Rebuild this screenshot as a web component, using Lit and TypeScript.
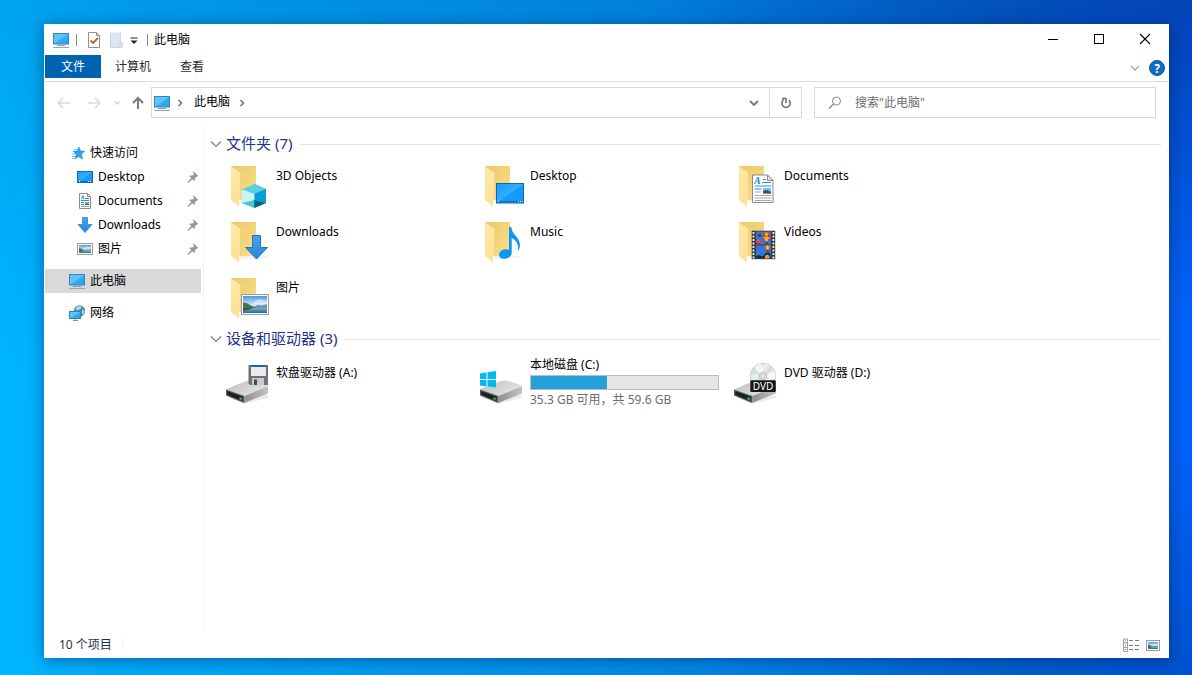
import { LitElement, html, svg, css } from "lit";
import { customElement, property } from "lit/decorators.js";

/* Shared gradients, repeated inside each icon so every shadow root can resolve them. */
const defs = svg`<defs>
  <linearGradient id="scr" x1="0" y1="0" x2="1" y2="1"><stop offset="0" stop-color="#5cc6f8"/><stop offset=".5" stop-color="#5cc4f9"/><stop offset=".52" stop-color="#35aef5"/><stop offset="1" stop-color="#2b9ff0"/></linearGradient>
  <linearGradient id="desk" x1="0" y1="0" x2="1" y2="1"><stop offset="0" stop-color="#149cff"/><stop offset=".5" stop-color="#36acff"/><stop offset=".52" stop-color="#159bff"/><stop offset="1" stop-color="#1597fb"/></linearGradient>
  <linearGradient id="back" x1="0" y1="0" x2="1" y2="1"><stop offset="0" stop-color="#eac867"/><stop offset="1" stop-color="#fbdf8b"/></linearGradient>
  <linearGradient id="flap" x1="0" y1="0" x2="0" y2="1"><stop offset="0" stop-color="#ffe9a6"/><stop offset="1" stop-color="#fce196"/></linearGradient>
  <linearGradient id="top" x1="0" y1="0" x2="1" y2=".6"><stop offset="0" stop-color="#bcbcbe"/><stop offset="1" stop-color="#e6e6e8"/></linearGradient>
  <linearGradient id="side" x1="0" y1="0" x2="1" y2="0"><stop offset="0" stop-color="#8e8e90"/><stop offset="1" stop-color="#c3c3c5"/></linearGradient>
  <linearGradient id="sky" x1="0" y1="0" x2="0" y2="1"><stop offset="0" stop-color="#4f95e4"/><stop offset=".55" stop-color="#d5ecfb"/><stop offset="1" stop-color="#d5ecfb"/></linearGradient>
  <linearGradient id="sea" x1="0" y1="0" x2="0" y2="1"><stop offset="0" stop-color="#7fb3c4"/><stop offset="1" stop-color="#28668f"/></linearGradient>
  <linearGradient id="arrow" x1="0" y1="0" x2="0" y2="1"><stop offset="0" stop-color="#4aa3ee"/><stop offset="1" stop-color="#2585da"/></linearGradient>
  <linearGradient id="disc" x1="0" y1="0" x2="1" y2="1"><stop offset="0" stop-color="#c9cdcc"/><stop offset=".35" stop-color="#eef0f0"/><stop offset=".5" stop-color="#d6e6dc"/><stop offset=".7" stop-color="#f4eef4"/><stop offset="1" stop-color="#c4c6c8"/></linearGradient>
</defs>`;

const folder = svg`
  <path d="M12 38h27l1 1.500-16 1.500H12z" fill="#000" opacity=".05"/>
  <path d="M3 4h25v34H12L3 36z" fill="url(#back)"/>
  <path d="M3 4l9.500 6.500v25.500L11 37v7.500L3 38z" fill="url(#flap)"/>
  <path d="M3 4l9.500 6.500v26" fill="none" stroke="#eccb78" stroke-width=".5"/>`;

const drive = svg`
  <path d="M-1 40l17 7 24-6v-3z" fill="#000" opacity=".08"/>
  <path d="M-2 32.500L8 28l11-4q3-1 6-.3L39 28l1 1.500-23.500 10z" fill="url(#top)"/>
  <path d="M-2 32.500v6L16 46l.5-7z" fill="#58585b"/>
  <path d="M-.700 34.300v3.500l15 6.200.4-4.200z" fill="#1e1e20"/>
  <path d="M16.500 39L40 29.200v7.300L16 46z" fill="url(#side)"/>
  <path d="M11.500 40.300l2.200.8v2l-2.200-.8z" fill="#3fe03a"/>`;

const monitor = svg`
  <rect x=".5" y="1.500" width="15" height="10.500" fill="url(#scr)" stroke="#3c84ad"/>
  <path d="M6 12.500h4v1H6z" fill="#9fb9ca"/><path d="M4 13.500h8" stroke="#7f9fb4"/>
  <path d="M0 15.500h16" stroke="#8ca5bd"/>`;

const scene = svg`
  <rect x="2" y="2" width="24" height="17" fill="url(#sky)"/>
  <path d="M14 7q2-2 4-1 2-2 4 0 2 0 4 1v3H12z" fill="#fff" opacity=".45"/>
  <path d="M12 13l5-2 4 .5 5-1.500v4H12z" fill="#7296a4"/>
  <path d="M2 8.500l4 .7 4 2.300 5 2-2 1H2z" fill="#43764a"/>
  <rect x="2" y="14" width="24" height="5" fill="url(#sea)"/>
  <path d="M2 14h10l-4 1.500-6 1.500z" fill="#2d5946"/>`;

const bigPhoto = svg`<g transform="translate(13 20)"><rect width="28" height="21" fill="#9b9b9b"/><rect x="1" y="1" width="26" height="19" fill="#fff"/>${scene}</g>`;

const smallPhoto = (x: number, y: number, w: number, h: number) => svg`
  <rect x=${x + 0.5} y=${y + 0.5} width=${w - 1} height=${h - 1} fill="#fff" stroke="#9b9b9b"/>
  <g transform="translate(${x + 2} ${y + 2}) scale(${(w - 4) / 24} ${(h - 4) / 17}) translate(-2 -2)">${scene}</g>`;

const balloon = (x: number, y: number) => svg`<g transform="translate(${x} ${y})">
  <path d="M0-4.500c4.500 0 5.500 5 3 7L1 5h-2l-2-2.500C-5.500.5-4.500-4.500 0-4.500z" fill="#d8502c"/>
  <path d="M0-4.500q-2.500 3-1 9h2q1.500-6-1-9z" fill="#f7cf2b"/><path d="M-4-1h8v1h-8z" fill="#263c3c" opacity=".7"/><path d="M-3.500 .500h7L2 2.500h-4z" fill="#f0a22c"/>
  <path d="M-1 6h2v1.500h-2z" fill="#432d23"/></g>`;

const page = (extra: unknown) => svg`<path d="M16.500 13h15l5.500 5.500v22H16.500z" fill="#fff" stroke="#8a8a8a"/><path d="M31.500 13v5.500H37z" fill="#e8e8e8" stroke="#8a8a8a"/>${extra}`;

const BIG: Record<string, unknown> = {
  objects: svg`${folder}
    <path d="M13.700 27.500L26.300 22v24l-12.600-5z" fill="#c0eef1"/><path d="M26.300 22L38 27v14l-11.700 5z" fill="#15b2ce"/>
    <path d="M13.700 27.500L26.300 22 38 27l-11.700 5z" fill="#5ad0dc"/><path d="M26.300 32L38 27v14l-11.700-3z" fill="#079fd5"/>
    <path d="M13.700 27.500l12.600 4.500v7l-12.600 2z" fill="#c9f3f4"/><path d="M13.700 41l12.600-3v8z" fill="#4fc6d0"/><path d="M26.300 38L38 41l-11.700 5z" fill="#04667d"/>`,
  desktop: svg`${folder}<rect x="14.500" y="21.500" width="27" height="19.500" fill="url(#desk)" stroke="#0b67ae"/>
    <path d="M15 39.500h26" stroke="#0873c5"/><path d="M15.500 39.500h1M36 39.500h1m1 0h1m1 0h1" stroke="#fff"/>`,
  documents: svg`${folder}${page(svg`
    <text x="18" y="22" class="letter">A</text>
    <path d="M27 17.500h3M26 20.500h9M18.500 24h17M18.500 27h7" stroke="#2293dc"/><rect x="27" y="26" width="8" height="5.500" fill="#7bb8e6"/><path d="M27 29l4-1 4 2v1.500h-8z" fill="#2f5967"/>
    <path d="M18.500 30h7M18.500 33.500h17M18.500 36h17M18.500 38.500h17" stroke="#a9a9a9"/>`)}`,
  downloads: svg`${folder}<path d="M24.500 17.500h8v12h7L28.500 41 17.500 29.500h7z" fill="url(#arrow)" stroke="#2673bb"/>`,
  music: svg`${folder}<path d="M27 9h2.300q.500 5 4.500 9 6.500 7 2.700 14.500h-.8q1.800-8.500-6-12.500v15.500q-1 4.500-6.500 5.200-6 .5-6.200-4.200.8-4.500 6-5.200 2.500-.2 4 .7z" fill="#0798f5"/>`,
  videos: svg`${folder}<rect x="15.700" y="12.700" width="23.500" height="28.500" fill="#3a3a3a"/>
    <path d="M17.500 14v27M37.400 14v27" stroke="#eee" stroke-width="1.800" stroke-dasharray="2 1.500"/>
    <rect x="20" y="13.500" width="15" height="13" fill="#3275d8"/><rect x="20" y="27.500" width="15" height="13" fill="#3275d8"/>
    <path d="M20 22l3-1 4 5.500h-7z" fill="#df4f57"/><path d="M20 24l3 1 4 1.500h-7z" fill="#8b2f86"/>
    ${balloon(30.5, 18.5)}<path d="M28 27.500h7q-.5 3-2.500 4h-2q-2-1-2.500-4z" fill="#e2692b"/><path d="M30.500 27.500h2v4h-2z" fill="#f7cf2b"/><path d="M31 32h1.500v1.500H31z" fill="#432d23"/>
    <path d="M22 16.500h3v2h-3z" fill="#234"/><path d="M20 38.500q2-2 4-1l3 1 2-3q3-2 5 0l1 5H20z" fill="#1b2836"/><path d="M29 38q2-3 4.500 0v2.500H29z" fill="#ef9727"/>`,
  pictures: svg`${folder}${bigPhoto}`,
  floppy: svg`${drive}<path d="M20.500 8H40v20H22l-1.500-1.500z" fill="#6f7175"/><rect x="23" y="8" width="15" height="11" fill="#e9ebed"/><rect x="23" y="8" width="15" height="2" fill="#1662b5"/>
    <rect x="24" y="21" width="12" height="7" fill="#c9cbce"/><rect x="26" y="22.500" width="3" height="5.500" fill="#494b4e"/>`,
  disk: svg`${drive}<path d="M-2 16.500l6.500-1v6.500H-2zM5.500 15.300L14 14v8H5.500zM-2 23h6.500v6.500l-6.500-1zM5.500 23H14v7.500l-8.500-1.200z" fill="#00b9f1"/>`,
  dvd: svg`${drive}<circle cx="27" cy="19" r="12.700" fill="url(#disc)" stroke="#b8bbbc" stroke-width=".6"/>
    <path d="M27 19L18 10q3-3 7-3.500zM27 19l12 3q1-4-.500-8z" fill="#fff" opacity=".6"/><path d="M27 19L15 16q1-3 2-4.500z" fill="#bfe8cd" opacity=".7"/><path d="M27 19l7-10q2 1.500 3 3z" fill="#ecc8e4" opacity=".7"/>
    <circle cx="27" cy="19" r="3.800" fill="#d8dadb" stroke="#aeb1b3" stroke-width=".6"/><circle cx="27" cy="19" r="1.600" fill="#fff" stroke="#aaa" stroke-width=".5"/>
    <rect x="14.300" y="23.300" width="25.500" height="11.700" rx="1" fill="#161616"/><text x="27" y="32.500" class="dvd">DVD</text>`,
};

const SMALL: Record<string, unknown> = {
  pc: monitor,
  star: svg`<path d="M10 2l1.500 4 4 .2-3.100 3 1 4.800-3.700-2.500L5.800 14l1.400-4.600L4.200 6.300l4-.2z" fill="#2aa4ee" stroke="#1a80c6" stroke-width=".6"/>
    <path d="M5 4.500h3M2.500 9h3.500M3 11.500h3M3 13.500h2" stroke="#54b8f1" stroke-width=".8"/>`,
  desktop: svg`<rect x=".5" y="2.500" width="15" height="11" fill="url(#desk)" stroke="#0b6cb8"/><path d="M1 12.500h14" stroke="#0873c5"/><path d="M2 12.500h1m8 0h1m1 0h1" stroke="#fff"/>`,
  documents: svg`<path d="M2.500.500h8l3 3v12h-11z" fill="#fff" stroke="#8a8a8a"/><path d="M10.500.500v3h3" fill="none" stroke="#8a8a8a"/><path d="M4.500 6l1.500-3.500L7 6M8 5.500h4M4 7.500h8M4 9.500h3M4 11.500h3" stroke="#2893db" fill="none"/><rect x="8" y="9" width="4" height="3" fill="#6ba5d0"/><path d="M8 11h4v1H8z" fill="#35606b"/><path d="M4 13.500h8" stroke="#999"/>`,
  downloads: svg`<path d="M5.500.500h5v7h4.500L8 15.500 1 7.500h4.500z" fill="url(#arrow)" stroke="#2a79c4" stroke-width=".7"/>`,
  pictures: smallPhoto(0, 2, 16, 12),
  network: svg`<circle cx="10.500" cy="6" r="5.500" fill="#4c94b9"/><path d="M6.500 3q3-3 6.500-1.500L11 4l-3 1.500zM13 5l3 1-1 4-2-2z" fill="#b7dbe4"/><circle cx="10.500" cy="6" r="5.300" fill="none" stroke="#3a7595" stroke-width=".5"/>
    <rect x=".5" y="6.500" width="11" height="7" fill="url(#scr)" stroke="#3981aa"/><path d="M4 15.500h5M6 14v1" stroke="#7498b0"/>`,
  check: svg`<path d="M2.500.500h8l3 3v12h-11z" fill="#fff" stroke="#919191"/><path d="M10.500.500v3h3" fill="none" stroke="#919191"/><path d="M4.500 8.500L7 11l5-5" fill="none" stroke="#e8501c" stroke-width="1.800"/>`,
  newFolder: svg`<path d="M2 .500h11v10h1.500v5.500H2z" fill="#dce5f4"/><path d="M2.500 1v14.500h9.500v-5.500h2v5.500h-2M12.500 1v9" fill="none" stroke="#c8d5ea"/>`,
  details: svg`<path d="M.500 2h4v12.500h-4zM.500 6h4M.500 10.500h4" fill="#fff" stroke="#a0a0a0"/><path d="M6 3.500h4m2 0h4M6 8.500h4m2 0h4M6 12.500h4m2 0h4" stroke="#777"/><path d="M2 4h1M2 8.500h1" stroke="#4b84c0"/><path d="M2 12.500h1" stroke="#c23b3b"/>`,
  thumbs: smallPhoto(1, 3, 14, 11),
  pin: svg`<path d="M8.500 2.500l4.500 4.500-1.500.3-1.700 1.700-.3 3-2-2L4 13l-1 .4.400-1L6.500 9l-2-2 3-.3 1.700-1.700z" fill="#8d989f" stroke="#8d989f" stroke-width=".6"/>`,
  back: svg`<path d="M14 8H2.500M7 3L2.200 8 7 13" fill="none" stroke="#d9d9d9" stroke-width="1.600"/>`,
  forward: svg`<path d="M2 8h11.500M9 3l4.800 5L9 13" fill="none" stroke="#d9d9d9" stroke-width="1.600"/>`,
  recent: svg`<path d="M5.500 6.500L8 9l2.500-2.500" fill="none" stroke="#d0d0d0" stroke-width="1.400"/>`,
  up: svg`<path d="M8 14V3M3 8l5-5 5 5" fill="none" stroke="#7a7a7a" stroke-width="2"/>`,
  right: svg`<path d="M6.500 5l3 3-3 3" fill="none" stroke="#777" stroke-width="1.600"/>`,
  down: svg`<path d="M4 6l4 4 4-4" fill="none" stroke="#757575" stroke-width="1.800"/>`,
  thin: svg`<path d="M4 6l4 4 4-4" fill="none" stroke="#a5a5a5" stroke-width="1.300"/>`,
  wide: svg`<path d="M3 5.500l5 5 5-5" fill="none" stroke="#7d7d7d" stroke-width="1.200"/>`,
  refresh: svg`<path d="M5.800 4.600a4.200 4.200 0 1 0 5 .4" fill="none" stroke="#707070" stroke-width="1.600"/><path d="M4 3.500h4v4.500" fill="none" stroke="#707070" stroke-width="1.600"/>`,
  search: svg`<circle cx="9.500" cy="6" r="4" fill="none" stroke="#85868e"/><path d="M6.500 9L2 13.500" stroke="#85868e" stroke-width="1.200"/>`,
  help: svg`<circle cx="8" cy="8" r="7.500" fill="#0f6cc4" stroke="#0b559e"/><text x="8" y="12.500" class="mark">?</text>`,
  menu: svg`<path d="M4.500 6h7" stroke="#222"/><path d="M4.500 8.500h7L8 12z" fill="#222"/>`,
  min: svg`<path d="M3 7.500h10" stroke="#000"/>`,
  max: svg`<rect x="3.500" y="2.500" width="9" height="9" fill="none" stroke="#000"/>`,
  close: svg`<path d="M3 2l10 10M13 2L3 12" stroke="#000" stroke-width="1.100"/>`,
};

@customElement("x-icon")
export class XIcon extends LitElement {
  @property() name = "";
  static styles = css`
    :host { display: inline-flex; flex: none; }
    svg { display: block; }
    .mark { font: bold 12px "Noto Sans", sans-serif; fill: #fff; text-anchor: middle; }
  `;
  render() {
    return html`<svg width="16" height="16" viewBox="0 0 16 16" aria-hidden="true">${defs}${SMALL[this.name]}</svg>`;
  }
}

@customElement("tile-icon")
export class TileIcon extends LitElement {
  @property() name = "";
  static styles = css`
    :host { display: block; flex: none; }
    svg { display: block; }
    .letter { font: italic bold 10px "Liberation Serif", serif; fill: #1788d4; }
    .dvd { font: 10px "Noto Sans", sans-serif; fill: #fff; text-anchor: middle; }
  `;
  render() {
    return html`<svg width="52" height="48" viewBox="-4 0 52 48" aria-hidden="true">${defs}${BIG[this.name]}</svg>`;
  }
}

const QUICK = [
  ["desktop", "Desktop"],
  ["documents", "Documents"],
  ["downloads", "Downloads"],
  ["pictures", "图片"],
];

const FOLDERS = [
  ["objects", "3D Objects"],
  ["desktop", "Desktop"],
  ["documents", "Documents"],
  ["downloads", "Downloads"],
  ["music", "Music"],
  ["videos", "Videos"],
  ["pictures", "图片"],
];

const DRIVES = [
  { icon: "floppy", name: "软盘驱动器 (A:)" },
  { icon: "disk", name: "本地磁盘 (C:)", free: 35.3, total: 59.6 },
  { icon: "dvd", name: "DVD 驱动器 (D:)" },
];

@customElement("app-root")
export class AppRoot extends LitElement {
  static styles = css`
    :host {
      display: flex;
      box-sizing: border-box;
      min-height: 100vh;
      padding: 24px 23px 17px 44px;
      font: 12px/16px "Noto Sans", "Noto Sans CJK SC", sans-serif;
      color: #000;
      background:
        radial-gradient(ellipse 45% 45% at 100% 0, rgba(8, 40, 130, 0.5), rgba(8, 40, 130, 0)),
        radial-gradient(ellipse 40% 35% at 100% 100%, rgba(0, 40, 110, 0.3), rgba(0, 40, 110, 0)),
        linear-gradient(to bottom, rgba(0, 60, 150, 0.14), rgba(0, 60, 150, 0) 60%),
        linear-gradient(to right, #00b6ff, #00a8f6 12%, #008fe6 50%, #006bdf 85%, #0062fa);
    }
    * { box-sizing: border-box; }
    a { color: inherit; text-decoration: none; }
    button { display: inline-flex; align-items: center; justify-content: center; margin: 0; padding: 0; border: 0; background: none; font: inherit; color: inherit; }
    .window { flex: 1; display: flex; flex-direction: column; min-width: 0; border: 1px solid #fff; background: #fff; box-shadow: 0 2px 14px rgba(0, 20, 70, 0.45); }
    .titlebar { display: flex; align-items: center; height: 30px; padding-left: 8px; }
    .rule { width: 1px; height: 12px; margin: 0 6px; background: #8c8c8c; }
    .rule.first { margin-left: 7px; }
    .quick { width: 22px; height: 22px; }
    .drop { width: 14px; height: 22px; }
    .title { flex: 1; margin: 0; font-size: 12px; font-weight: 400; }
    .control { width: 46px; height: 30px; }
    .ribbon { display: flex; align-items: center; height: 27px; border-bottom: 1px solid #dadbdc; color: #2b2b2b; }
    .tab { height: 23px; align-self: flex-start; padding: 1px 14px 0; }
    .tab.view { padding: 1px 15px 0; }
    .tab.file { padding: 1px 16px 0; background: #0063b1; color: #fff; }
    .spacer { flex: 1; }
    .ribbon .tool { width: 22px; height: 22px; }
    .address-row { display: flex; align-items: center; gap: 12px; padding: 5px 12px 7px 4px; }
    .left { flex: 1; display: flex; align-items: center; min-width: 0; }
    .nav { width: 30px; height: 30px; }
    .nav.small { width: 16px; }
    .nav.up { width: 26px; }
    .address { flex: 1; display: flex; align-items: center; height: 31px; border: 1px solid #d9d9d9; padding-left: 2px; }
    .address .crumb { padding: 0 4px 1px; }
    .address x-icon { margin-right: 2px; }
    .address button x-icon { margin: 0; }
    .address .crumb + x-icon { margin: 0; }
    .chev { width: 30px; height: 29px; }
    .refresh { width: 32px; height: 29px; border-left: 1px solid #d9d9d9; }
    .search { display: flex; align-items: center; width: 342px; height: 31px; padding-left: 12px; border: 1px solid #d9d9d9; gap: 12px; }
    .search input { flex: 1; min-width: 0; padding: 0; border: 0; outline: 0; font: inherit; background: none; }
    .search input::placeholder { color: #6d6d6d; opacity: 1; }
    .body { flex: 1; display: flex; min-height: 0; }
    .sidebar { flex: none; width: 159px; padding: 16px 2px 0 0; border-right: 1px solid #f5f5f5; }
    .side-list { list-style: none; margin: 0 0 8px; padding: 0; }
    .side { display: flex; align-items: center; gap: 5px; height: 24px; padding-left: 24px; }
    .side.child { padding-left: 32px; }
    .side.current { background: #d9d9d9; }
    .side .label { flex: 1; }
    .content { flex: 1; min-width: 0; padding: 10px 7px 0; }
    .heading { display: flex; align-items: center; height: 18px; margin: 0 0 9px -4px; font-size: 15px; font-weight: 400; color: #1e3287; }
    .heading button { width: 18px; height: 18px; }
    .heading .name { padding: 0 0 2px 1px; }
    .line { flex: 1; height: 1px; margin-left: 8px; background: #e2e2e2; }
    .grid { display: grid; grid-template-columns: repeat(auto-fill, 254px); grid-auto-rows: 56px; padding-left: 13px; }
    .tile { display: flex; }
    .tile .text { padding-top: 6px; }
    .drive .text { display: flex; flex-direction: column; padding-top: 8px; }
    .drive .text.full { flex: 1; padding: 0 13px 0 0; }
    .detail { color: #6d6d6d; }
    progress { appearance: none; display: block; width: 100%; height: 15px; margin: 2px 0; border: 1px solid #bcbcbc; background: #e6e6e6; }
    progress::-webkit-progress-bar { background: #e6e6e6; }
    progress::-webkit-progress-value { background: #26a0da; }
    .status { display: flex; align-items: center; height: 25px; padding: 0 4px 0 14px; color: #1e2f4d; }
    .status .count { padding-right: 10px; border-right: 1px solid #f3f3f3; }
    .status button { width: 22px; height: 22px; }
  `;

  render() {
    return html`
      <main class="window">
        <header class="titlebar">
          <x-icon name="pc"></x-icon>
          <span class="rule first"></span>
          <button class="quick" aria-label="属性"><x-icon name="check"></x-icon></button>
          <button class="quick" aria-label="新建文件夹" disabled><x-icon name="newFolder"></x-icon></button>
          <button class="drop" aria-label="自定义快速访问工具栏"><x-icon name="menu"></x-icon></button>
          <span class="rule"></span>
          <h1 class="title">此电脑</h1>
          <button class="control" aria-label="最小化"><x-icon name="min"></x-icon></button>
          <button class="control" aria-label="最大化"><x-icon name="max"></x-icon></button>
          <button class="control" aria-label="关闭"><x-icon name="close"></x-icon></button>
        </header>
        <div class="ribbon">
          <button class="tab file">文件</button>
          <button class="tab">计算机</button>
          <button class="tab view">查看</button>
          <span class="spacer"></span>
          <button class="tool" aria-label="展开功能区"><x-icon name="thin"></x-icon></button>
          <button class="tool" aria-label="帮助"><x-icon name="help"></x-icon></button>
        </div>
        <div class="address-row">
          <div class="left">
            <button class="nav" aria-label="后退" disabled><x-icon name="back"></x-icon></button>
            <button class="nav" aria-label="前进" disabled><x-icon name="forward"></x-icon></button>
            <button class="nav small" aria-label="最近位置"><x-icon name="recent"></x-icon></button>
            <button class="nav up" aria-label="向上"><x-icon name="up"></x-icon></button>
            <div class="address">
              <x-icon name="pc"></x-icon>
              <x-icon name="right"></x-icon>
              <a class="crumb" href="#pc">此电脑</a>
              <x-icon name="right"></x-icon>
              <span class="spacer"></span>
              <button class="chev" aria-label="以前的位置"><x-icon name="down"></x-icon></button>
              <button class="refresh" aria-label="刷新"><x-icon name="refresh"></x-icon></button>
            </div>
          </div>
          <label class="search">
            <x-icon name="search"></x-icon>
            <input type="text" aria-label="搜索" placeholder='搜索"此电脑"' />
          </label>
        </div>
        <div class="body">
          <nav class="sidebar">
            <ul class="side-list">
              <li><a class="side root" href="#quick"><x-icon name="star"></x-icon><span class="label">快速访问</span></a></li>
              ${QUICK.map(([icon, name]) => html`
                <li><a class="side child" href="#${icon}"><x-icon name=${icon}></x-icon><span class="label">${name}</span><x-icon name="pin"></x-icon></a></li>`)}
            </ul>
            <ul class="side-list">
              <li><a class="side root current" href="#pc" aria-current="page"><x-icon name="pc"></x-icon><span class="label">此电脑</span></a></li>
            </ul>
            <ul class="side-list">
              <li><a class="side root" href="#network"><x-icon name="network"></x-icon><span class="label">网络</span></a></li>
            </ul>
          </nav>
          <div class="content">
            <section>
              <h2 class="heading"><button aria-label="折叠文件夹"><x-icon name="wide"></x-icon></button><span class="name">文件夹 (7)</span><span class="line"></span></h2>
              <div class="grid">
                ${FOLDERS.map(([icon, name]) => html`
                  <a class="tile" href="#${icon}"><tile-icon name=${icon}></tile-icon><span class="text">${name}</span></a>`)}
              </div>
            </section>
            <section>
              <h2 class="heading"><button aria-label="折叠设备和驱动器"><x-icon name="wide"></x-icon></button><span class="name">设备和驱动器 (3)</span><span class="line"></span></h2>
              <div class="grid">
                ${DRIVES.map((d) => html`
                  <a class="tile drive" href="#${d.icon}">
                    <tile-icon name=${d.icon}></tile-icon>
                    <span class="text ${d.total ? "full" : ""}">
                      <span>${d.name}</span>
                      ${d.total && d.free
                        ? html`<progress aria-label="已用空间" max=${d.total} value=${d.total - d.free}></progress>
                            <span class="detail">${d.free} GB 可用，共 ${d.total} GB</span>`
                        : ""}
                    </span>
                  </a>`)}
              </div>
            </section>
          </div>
        </div>
        <footer class="status">
          <span class="count">10 个项目</span>
          <span class="spacer"></span>
          <button aria-label="详细信息"><x-icon name="details"></x-icon></button>
          <button aria-label="大缩略图"><x-icon name="thumbs"></x-icon></button>
        </footer>
      </main>
    `;
  }
}
